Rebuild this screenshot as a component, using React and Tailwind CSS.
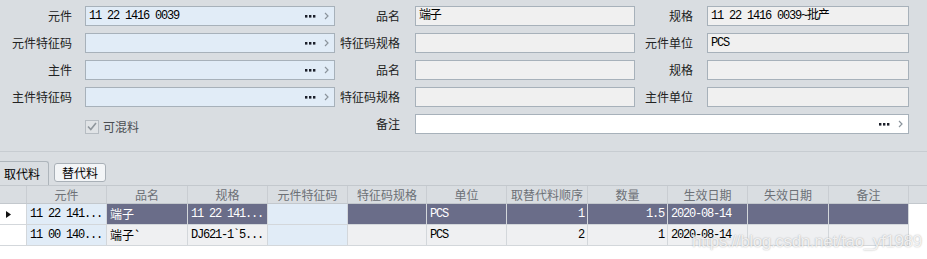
import React from "react";

const cjk = "font-['Noto_Sans_CJK_SC',sans-serif]";
const mono = "font-['Liberation_Mono','Noto_Sans_CJK_SC',monospace] text-[12px] tracking-[-1.2px]";

function Dots() {
  return (
    <svg width="11" height="3" viewBox="0 0 11 3" className="shrink-0">
      <rect x="0" y="0" width="2.4" height="2.6" fill="#1b1f2a" />
      <rect x="4" y="0" width="2.4" height="2.6" fill="#1b1f2a" />
      <rect x="8" y="0" width="2.4" height="2.6" fill="#1b1f2a" />
    </svg>
  );
}

function Chevron() {
  return (
    <svg width="5" height="8" viewBox="0 0 5 8" className="shrink-0">
      <path d="M1 1 L4 4 L1 7" stroke="#8b949c" strokeWidth="1.2" fill="none" />
    </svg>
  );
}

function Label({ children, pr }) {
  return (
    <div className={`flex items-center justify-end text-[12px] text-[#222] ${cjk} ${pr}`}>{children}</div>
  );
}

function Field({ value, tone = "gray", picker = false, span = "" }) {
  const bg = tone === "blue" ? "bg-[#e1ecf7]" : tone === "white" ? "bg-white" : "bg-[#f0f0f0]";
  return (
    <div className={`flex items-center border border-[#a7b1ba] ${bg} ${span}`}>
      <div className={`flex-1 pl-[3px] text-black whitespace-nowrap ${mono}`}>{value}</div>
      {picker && (
        <div className="flex items-center gap-[8px] pr-[5px]">
          <Dots />
          <Chevron />
        </div>
      )}
    </div>
  );
}

const cols = [
  { w: "w-[27px]", h: "" },
  { w: "w-[80px]", h: "元件" },
  { w: "w-[81px]", h: "品名" },
  { w: "w-[80px]", h: "规格" },
  { w: "w-[80px]", h: "元件特征码" },
  { w: "w-[79px]", h: "特征码规格" },
  { w: "w-[80px]", h: "单位" },
  { w: "w-[81px]", h: "取替代料顺序" },
  { w: "w-[80px]", h: "数量" },
  { w: "w-[80px]", h: "生效日期" },
  { w: "w-[81px]", h: "失效日期" },
  { w: "w-[80px]", h: "备注" },
];

const rows = [
  { sel: true, cells: ["", "11 22 141...", "端子", "11 22 141...", "", "", "PCS", "1", "1.5", "2020-08-14", "", ""] },
  { sel: false, cells: ["", "11 00 140...", "端子`", "DJ621-1`5...", "", "", "PCS", "2", "1", "2020-08-14", "", ""] },
];

const blueCols = [1, 4];
const rightCols = [7, 8];

export default function App() {
  return (
    <div className={`relative w-[927px] h-[259px] overflow-hidden bg-[#d9dde1] ${cjk}`}>
      {/* form */}
      <div className="h-[151px] pt-[6px] grid grid-cols-[85px_250px_80px_220px_72px_202px] auto-rows-[20px] gap-y-[7px]">
        <Label pr="pr-[13px]">元件</Label>
        <Field tone="blue" value="11 22 1416 0039" picker />
        <Label pr="pr-[15px]">品名</Label>
        <Field value="端子" />
        <Label pr="pr-[14px]">规格</Label>
        <Field value="11 22 1416 0039~批产" />

        <Label pr="pr-[13px]">元件特征码</Label>
        <Field tone="blue" picker />
        <Label pr="pr-[15px]">特征码规格</Label>
        <Field />
        <Label pr="pr-[14px]">元件单位</Label>
        <Field value="PCS" />

        <Label pr="pr-[13px]">主件</Label>
        <Field tone="blue" picker />
        <Label pr="pr-[15px]">品名</Label>
        <Field />
        <Label pr="pr-[14px]">规格</Label>
        <Field />

        <Label pr="pr-[13px]">主件特征码</Label>
        <Field tone="blue" picker />
        <Label pr="pr-[15px]">特征码规格</Label>
        <Field />
        <Label pr="pr-[14px]">主件单位</Label>
        <Field />

        <div />
        <div className="flex items-center gap-[4px] pt-[5px]">
          <div className="w-[14px] h-[14px] border border-[#b6bcc2] bg-[#e0e3e6] flex items-center justify-center">
            <svg width="10" height="9" viewBox="0 0 10 9">
              <path d="M1 4.5 L3.8 7.5 L9 1" stroke="#8f969c" strokeWidth="1.6" fill="none" />
            </svg>
          </div>
          <span className="text-[12px] text-[#4a4d52]">可混料</span>
        </div>
        <Label pr="pr-[15px]">备注</Label>
        <Field tone="white" picker span="col-span-3" />
      </div>

      <div className="h-px bg-[#c7ccd1]" />

      {/* tabs */}
      <div className="h-[33px] flex items-end">
        <div className="w-[49px] h-[24px] border-t border-r border-[#aeb5bb] rounded-tr-[3px] flex items-center pl-[4px] text-[12px] text-black">
          取代料
        </div>
        <div className="ml-[5px] mb-[3px] w-[52px] h-[19px] bg-[#f3f5f7] border border-[#a9b0b7] rounded-[3px] flex items-center justify-center text-[12px] text-black">
          替代料
        </div>
      </div>

      {/* grid */}
      <div className="bg-white h-[74px]">
        <div className="flex h-[19px] bg-[#d9dde1] border-t border-b border-[#c3c8cd]">
          {cols.map((c, i) => (
            <div
              key={i}
              className={`${c.w} shrink-0 flex items-center justify-center text-[12px] text-[#6c7076] border-r border-[#c9cdd2]`}
            >
              {c.h}
            </div>
          ))}
        </div>
        {rows.map((r, ri) => (
          <div key={ri} className="flex h-[21px]">
            {r.cells.map((v, i) => {
              const blue = blueCols.includes(i);
              let cls = "";
              if (i === 0) cls = "bg-white";
              else if (blue) cls = "bg-[#e1ecf7] text-black";
              else if (r.sel) cls = "bg-[#6a6d89] text-white";
              else cls = "bg-[#eff0f2] text-black";
              const isCjk = /[\u4e00-\u9fff]/.test(v);
              return (
                <div
                  key={i}
                  className={`${cols[i].w} shrink-0 flex items-center border-r border-b border-[#d3d7db] whitespace-nowrap overflow-hidden ${cls} ${
                    rightCols.includes(i) ? "justify-end pr-[3px]" : "pl-[3px]"
                  } ${isCjk ? "text-[12px]" : mono}`}
                >
                  {i === 0 && r.sel ? (
                    <svg width="5" height="7" viewBox="0 0 5 7" className="ml-[3px]">
                      <path d="M0 0 L5 3.5 L0 7 Z" fill="#111" />
                    </svg>
                  ) : (
                    v
                  )}
                </div>
              );
            })}
          </div>
        ))}
      </div>

      {/* watermark */}
      <div className="absolute left-[692px] top-[229px] whitespace-nowrap text-[17px] tracking-[-0.35px] text-white/80 font-['Liberation_Sans',sans-serif] [text-shadow:0_0_1.5px_rgba(0,0,0,0.35)] pointer-events-none">
        https://blog.csdn.net/tao_yf1989
      </div>
    </div>
  );
}
